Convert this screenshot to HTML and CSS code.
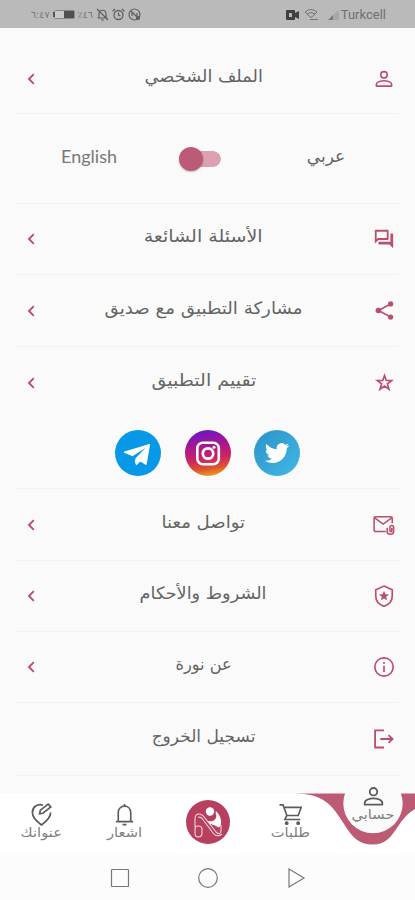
FILE: index.html
```html
<!DOCTYPE html>
<html lang="ar" dir="rtl">
<head>
<meta charset="utf-8">
<meta name="viewport" content="width=device-width, initial-scale=1">
<title>حسابي</title>
<link rel="stylesheet" href="styles.css">
</head>
<body>
<svg class="defs" width="0" height="0" aria-hidden="true">
  <symbol id="chevron" viewBox="0 0 10 12"><path d="M7.800 1.200 3 6l4.800 4.800" fill="none" stroke="currentColor" stroke-width="1.900"/></symbol>
  <symbol id="person" viewBox="0 0 24 24"><circle cx="12" cy="7" r="3.900" fill="none" stroke="currentColor" stroke-width="1.900"/><path d="M2.800 20.500v-1.800c0-3.200 5.500-4.700 9.200-4.700s9.200 1.500 9.200 4.700v1.800z" fill="none" stroke="currentColor" stroke-width="1.900" stroke-linejoin="round"/></symbol>
</svg>

<header class="status">
  <div class="status-group">
    <span class="carrier">Turkcell</span>
    <svg class="signal" width="13" height="12" viewBox="0 0 13 12"><path d="M1 11 6 6v5z" fill="#7a7a7a"/><path d="M6 6 12 1v10H6z" fill="#a8a8a8"/></svg>
    <svg class="wifi" width="15" height="13" viewBox="0 0 15 13" fill="none" stroke="#757575"><path d="M1 4q6-5 12 0M3 6q4-3 8 0M5 8l2 1.500L9 8M1 4l4 4M13 4 9 8M6 11.500h8"/></svg>
    <svg width="13" height="10" viewBox="0 0 13 10"><path d="M1 0h7q1 0 1 1v2l4-2v8L9 7v2q0 1-1 1H1Q0 10 0 9V1q0-1 1-1z" fill="#404040"/><path d="M3 3h3v4H3z" fill="#b9b9b9"/></svg>
  </div>
  <div class="status-group">
    <svg width="13" height="13" viewBox="0 0 13 13" fill="none" stroke="#606060" stroke-width="1.200"><circle cx="6.500" cy="6.500" r="5.500"/><path d="M4 8V4l5 5V5M3 3l7 7"/><circle cx="10" cy="10" r="1.500" fill="#606060"/></svg>
    <svg width="13" height="13" viewBox="0 0 13 13" fill="none" stroke="#606060" stroke-width="1.300"><circle cx="6.500" cy="7" r="4.500"/><path d="M6.500 4.500V7l2 1M.6 3.200 3 1M12.400 3.200 10 1"/></svg>
    <svg width="13" height="13" viewBox="0 0 13 13" fill="none" stroke="#606060" stroke-width="1.200"><path d="M3 10V6c0-5 7-5 7 0v4M1.500 10h10M5 12h3M1 1l11 11"/></svg>
    <span class="status-num">٤٦٪</span>
    <svg width="22" height="10" viewBox="0 0 22 10"><rect x="1.500" y=".5" width="20" height="8" rx="1" fill="#cacaca" stroke="#888"/><path d="M11 1h10v7H11z" fill="#505050"/><path d="M0 2h2v5H0z" fill="#555"/></svg>
    <span class="status-num">٦:٤٧</span>
  </div>
</header>

<main class="menu">
  <a class="row profile"><svg class="icon" viewBox="0 0 24 24"><use href="#person"/></svg><span class="label"><b>الملف الشخصي</b></span><svg class="chevron"><use href="#chevron"/></svg></a>

  <div class="language">
    <span class="lang-name arabic">عربي</span>
    <span class="switch"><i></i></span>
    <span class="lang-name english" lang="en">English</span>
  </div>

  <a class="row faq"><svg class="icon" viewBox="0 0 24 24" fill="currentColor"><path d="M15 4v7H5.170L4 12.170V4zm1-2H3c-.55 0-1 .45-1 1v14l4-4h10c.55 0 1-.45 1-1V3c0-.55-.45-1-1-1m5 4h-2v9H6v2c0 .55.45 1 1 1h11l4 4V7c0-.55-.45-1-1-1"/></svg><span class="label"><b>الأسئلة الشائعة</b></span><svg class="chevron"><use href="#chevron"/></svg></a>

  <a class="row share"><svg class="icon" viewBox="0 0 24 24"><path d="M19 4.500 5 12l14 7.500" fill="none" stroke="currentColor" stroke-width="1.800"/><g fill="currentColor"><circle cx="19" cy="4.500" r="3"/><circle cx="5" cy="12" r="3.200"/><circle cx="19" cy="19.500" r="3"/></g></svg><span class="label"><b>مشاركة التطبيق مع صديق</b></span><svg class="chevron"><use href="#chevron"/></svg></a>

  <a class="row rate"><svg class="icon" viewBox="0 0 24 24"><path d="m12 4 2 5.700h6.200l-4.900 3.800 1.800 6.200-5.100-3.700-5.100 3.700 1.800-6.200-4.900-3.800H10z" fill="none" stroke="currentColor" stroke-width="1.900"/></svg><span class="label"><b>تقييم التطبيق</b></span><svg class="chevron"><use href="#chevron"/></svg></a>

  <div class="social">
    <svg viewBox="0 0 46 46"><defs><linearGradient id="tw" x1="0" y1="0" x2="1" y2="1"><stop stop-color="#2b93c8"/><stop offset="1" stop-color="#42b7e5"/></linearGradient></defs><circle cx="23" cy="23" r="23" fill="url(#tw)"/><path transform="translate(10.800 10.800) scale(1.020)" fill="#fff" d="M23.950 4.570a10 10 0 0 1-2.820.770 4.960 4.960 0 0 0 2.160-2.720c-.95.550-2 .960-3.130 1.180a4.920 4.920 0 0 0-8.380 4.480C7.690 8.090 4.070 6.130 1.640 3.160a4.820 4.820 0 0 0-.670 2.480c0 1.710.870 3.210 2.190 4.100a4.900 4.900 0 0 1-2.230-.620v.060a4.920 4.920 0 0 0 3.950 4.830 5 5 0 0 1-2.210.080 4.940 4.940 0 0 0 4.600 3.420A9.870 9.870 0 0 1 0 19.540a13.940 13.940 0 0 0 7.550 2.210c9.050 0 14-7.500 14-13.980 0-.21 0-.42-.020-.630a9.940 9.940 0 0 0 2.460-2.550z"/></svg>
    <svg viewBox="0 0 46 46"><defs><linearGradient id="ig" x1=".35" y1="0" x2=".5" y2="1"><stop stop-color="#6817c8"/><stop offset=".3" stop-color="#a11698"/><stop offset=".63" stop-color="#cc2365"/><stop offset=".85" stop-color="#df562d"/><stop offset="1" stop-color="#eb9c25"/></linearGradient></defs><circle cx="23" cy="23" r="23" fill="url(#ig)"/><g fill="none" stroke="#fff"><rect x="12.300" y="12.800" width="21.500" height="21.500" rx="5.500" stroke-width="2.600"/><circle cx="23" cy="23.500" r="5.200" stroke-width="2.700"/></g><circle cx="29" cy="17.200" r="1.500" fill="#fff"/></svg>
    <svg viewBox="0 0 46 46"><circle cx="23" cy="23" r="23" fill="#0798e8"/><path d="M9.500 21.500 34.300 14c.7-.2.900.2.700 1l-3.300 19c-.2.900-.9 1.100-1.600.6l-4.800-3.200-3.200 3.300c-.5.600-1.200.4-1.400-.4L18.300 26.500l-8.600-3.400c-.9-.4-.9-1.200-.2-1.600z" fill="#fff"/><path d="m17.500 26.200 13.300-8.400-10.300 10.400-.5 4z" fill="#0798e8"/></svg>
  </div>

  <a class="row contact"><svg class="icon" viewBox="0 0 24 24" fill="none" stroke="currentColor" stroke-width="1.700"><path d="M14 19H2.500Q1.200 19 1.200 17.500V4.500Q1.200 3 2.500 3h17Q21 3 21 4.500V10M1.500 4l9.600 7L20.700 4"/><path d="M15.500 15v4c0 4 7 4 7 0v-4.500c0-2.700-4-2.700-4 0v4q1 1.500 2 0V15"/></svg><span class="label"><b>تواصل معنا</b></span><svg class="chevron"><use href="#chevron"/></svg></a>

  <a class="row terms"><svg class="icon" viewBox="0 0 24 24"><path d="m12 1.200 9 4V12c0 5-3.500 9.300-9 11.300-5.500-2-9-6.300-9-11.300V5.200z" fill="none" stroke="currentColor" stroke-width="1.800"/><path d="m12 6.300 1.500 3.700 4 .3-3.100 2.500 1 3.900-3.400-2.100-3.400 2.100 1-3.900-3.100-2.500 4-.3z" fill="currentColor"/></svg><span class="label"><b>الشروط والأحكام</b></span><svg class="chevron"><use href="#chevron"/></svg></a>

  <a class="row about"><svg class="icon" viewBox="0 0 24 24"><circle cx="12" cy="12" r="10" fill="none" stroke="currentColor" stroke-width="1.800"/><path d="M11.100 10.500h1.800v7h-1.800zM11.100 6.800h1.800v2h-1.800z" fill="currentColor"/></svg><span class="label"><b>عن نورة</b></span><svg class="chevron"><use href="#chevron"/></svg></a>

  <a class="row logout"><svg class="icon" viewBox="0 0 24 24" fill="none" stroke="currentColor" stroke-width="2"><path d="M12 2.500H2.300v18.800H12M8 12h13M17 7.700l4.300 4.300-4.300 4.300"/></svg><span class="label"><b>تسجيل الخروج</b></span></a>
</main>

<nav class="tabs">
  <svg class="wave" width="121" height="53" viewBox="0 0 121 53"><path d="M0 .5C30 .5 38 12 50 31c8 13 15 20.500 28.500 20.500S97 44 105 32c6-9 11-13 16-16V.5z" fill="#bd5a74"/><circle cx="79" cy="10.500" r="29.700" fill="#fafafa"/></svg>
  <a class="tab account"><svg viewBox="0 0 24 24"><use href="#person"/></svg><span>حسابي</span></a>
  <a class="tab orders"><svg viewBox="0 0 24 24" fill="none" stroke="currentColor" stroke-width="1.700"><path d="M.5 2h3.700l4 11H20l3.200-8.500H5.500M8.200 13l-2 4.200h16"/><circle cx="8" cy="21" r="1.200" fill="currentColor"/><circle cx="20" cy="21" r="1.200" fill="currentColor"/></svg><span>طلبات</span></a>
  <a class="brand"><svg viewBox="0 0 44 44"><circle cx="22" cy="22" r="22" fill="#b8405f"/><circle cx="24" cy="11.500" r="4.200" fill="#fff"/><path d="M30 11q6 6 5 13c-1 5-3 3-5 2-3-2-6 0-9-5 6 1 8-1 9-3 1-3-1-4 0-7z" fill="#fff"/><path d="M9 27V19q0-5 4-5 3 0 6 4l11 14q4 4 5-1v-6M12 17q4 0 6 4l9 12q4 5 9 1M9 29q0-3 3-3 4 0 4 3v4q0 4-4 4-3 0-3-4z" fill="none" stroke="#eed6dc" stroke-width="1.100"/></svg></a>
  <a class="tab alerts"><svg viewBox="0 0 24 24" fill="none" stroke="currentColor" stroke-width="1.700"><path d="M5.500 19V10c0-9 13-9 13 0v9M3 19.500h18M12 1v2.500M10 22.500h4"/></svg><span>اشعار</span></a>
  <a class="tab address"><svg viewBox="0 0 24 24" fill="none" stroke="currentColor" stroke-width="1.800"><path d="M13.500 2.200C7 .5 2.500 4.500 2.500 10c0 5 6 10.500 9.500 13 3.500-2.500 9.500-8 9.500-13"/><path d="m10 11.200.8-3.700L19 1.200l2.700 2.900-8.200 6.600z"/></svg><span>عنوانك</span></a>
</nav>

<footer class="system">
  <svg viewBox="0 0 22 22"><path d="M4 2v18l15-9z"/></svg>
  <svg viewBox="0 0 22 22"><circle cx="11" cy="11" r="9.300"/></svg>
  <svg viewBox="0 0 22 22"><rect x="2.500" y="2.500" width="17" height="17" rx=".5"/></svg>
</footer>
</body>
</html>
```
FILE: styles.css
```css
* { box-sizing: border-box; }
body {
  margin: 0;
  width: 415px;
  height: 900px;
  overflow: hidden;
  display: flex;
  flex-direction: column;
  background: #fafafa;
  color: #646464;
  font-family: "DejaVu Sans", sans-serif;
}
svg { display: block; flex: none; }
.defs { position: absolute; }

.status {
  height: 28px;
  flex: none;
  padding: 1px 29px 0 31px;
  display: flex;
  align-items: center;
  justify-content: space-between;
  background: #bababa;
  color: #707070;
}
.status-group { display: flex; align-items: center; gap: 3px; }
.carrier { font: 13px Roboto, sans-serif; }
.wifi { margin-left: 2px; margin-right: 5px; }
.signal { margin-right: -2px; }
.status-num { font-size: 9.500px; color: #777; }

.menu { flex: none; height: 765px; }
.row {
  display: grid;
  grid-template-columns: 30px 1fr 30px;
  align-items: center;
  height: 71px;
  margin: 0 16px;
  border-bottom: 1px solid #f1f1f1;
}
.icon { width: 22px; height: 22px; color: #bb4f6b; justify-self: center; }
.chevron { width: 10px; height: 12px; color: #bb4f6b; justify-self: center; }
.label {
  text-align: center;
  font-size: 17px;
  white-space: nowrap;
  padding: 0 0 6px 8px;
  padding-left: 0;
  padding-right: 8px;
}
.label b { display: inline-block; font-weight: normal; }

.profile { height: 86px; padding-top: 16px; }
.profile .icon { width: 20px; height: 20px; }
.share .icon, .rate .icon { width: 21px; height: 21px; }
.share, .contact { height: 72px; }
.rate { border-bottom: 0; }
.logout { height: 73px; }

.profile b { transform: scaleX(1.045); }
.faq b { transform: scaleX(1.120); }
.share b { transform: scaleX(1.070); }
.rate b { transform: scaleX(1.120); }
.contact b { transform: scaleX(1.065); }
.terms b { transform: scaleX(1.040); }
.about b { transform: scaleX(.950); }

.social {
  height: 71px;
  margin: 0 16px;
  padding: 0 99px 1px 0;
  display: flex;
  gap: 23.500px;
  align-items: center;
  border-bottom: 1px solid #f1f1f1;
}
.social svg { width: 46px; height: 46px; }

.language {
  display: grid;
  grid-template-columns: 146px 1fr 146px;
  align-items: center;
  height: 90px;
  margin: 0 16px;
  border-bottom: 1px solid #f1f1f1;
  font-size: 17px;
}
.lang-name { text-align: center; padding-bottom: 5px; }
.english { font: 18px Lato, sans-serif; color: #777; }
.switch {
  width: 42px;
  height: 24px;
  margin-right: 32px;
  display: flex;
  align-items: center;
  justify-content: flex-end;
  background: radial-gradient(circle at 34px 12px, #dda0b0 7.500px, transparent 8px), linear-gradient(#dda0b0, #dda0b0) 12px center / 22px 16px no-repeat;
}
.switch i {
  width: 24px;
  height: 24px;
  border-radius: 50%;
  background: #bd5a77;
  box-shadow: 0 1px 2px rgba(0, 0, 0, .25);
}

.tabs {
  position: relative;
  height: 62px;
  flex: none;
  display: grid;
  grid-template-columns: repeat(5, 83px);
  background: #fff;
  color: #5c5c5c;
}
.wave { position: absolute; right: 0; top: 0; }
.tab {
  position: relative;
  display: flex;
  flex-direction: column;
  align-items: center;
  padding-top: 10px;
}
.tab svg { width: 23px; height: 23px; }
.tab span { font-size: 13px; line-height: 14px; color: #808080; transform: scaleX(1.130); }
.account { margin-top: -8px; padding-top: 0; }
.account svg { height: 23px; }
.brand { display: flex; justify-content: center; padding-top: 7px; }
.brand svg { width: 44px; height: 44px; }

.system {
  flex: 1;
  display: flex;
  justify-content: center;
  gap: 66px;
  padding-top: 12px;
  background: #fcfcfc;
}
.system svg { width: 22px; height: 22px; fill: none; stroke: #777; stroke-width: 1.200; }
```
